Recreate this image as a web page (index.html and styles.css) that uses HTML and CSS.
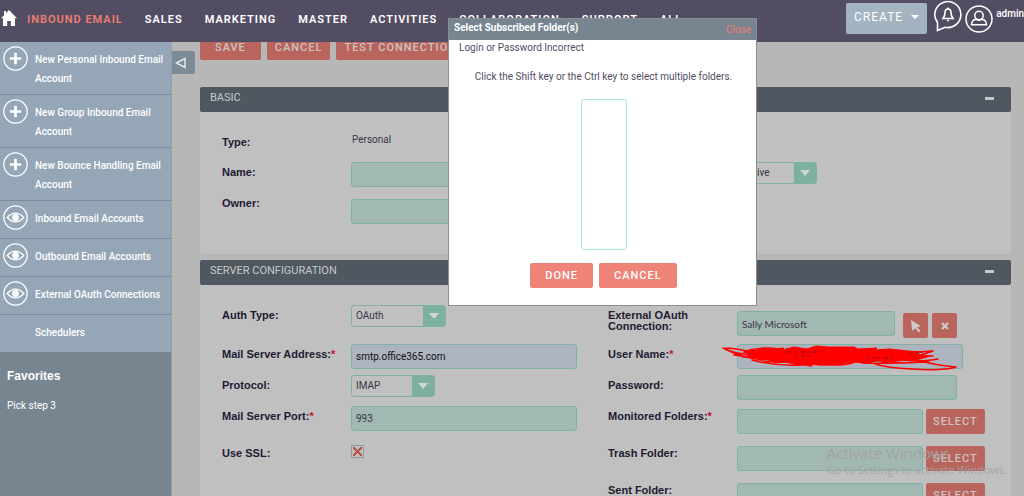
FILE: index.html
```html
<!DOCTYPE html>
<html lang="en">
<head>
<meta charset="utf-8">
<title>Inbound Email</title>
<link rel="stylesheet" href="styles.css">
</head>
<body>
<svg class="defs" aria-hidden="true">
  <symbol id="plus" viewBox="0 0 24 24"><circle cx="12" cy="12" r="11.2" fill="none" stroke="#fff" stroke-width="1.2"/><path d="M12 6.5v11M6.500 12h11" stroke="#fff" stroke-width="2.600"/></symbol>
  <symbol id="eye" viewBox="0 0 24 24"><circle cx="12" cy="12" r="11.2" fill="none" stroke="#fff" stroke-width="1.2"/><path d="M4 12Q12 3.500 20 12Q12 20.500 4 12Z" fill="none" stroke="#fff" stroke-width="1.200"/><circle cx="12" cy="12" r="3.300" fill="#fff"/></symbol>
</svg>

<header class="topbar">
  <a class="home" href="#" aria-label="Home"><svg width="16" height="16" viewBox="0 0 16 16"><path d="M8 0 16 8.200H14V16H9.800V11H6.200V16H2V8.200H0L3 5.100V1H5V3Z" fill="#fff"/></svg></a>
  <nav class="nav">
    <a class="current" href="#">INBOUND EMAIL</a>
    <a href="#">SALES</a>
    <a href="#">MARKETING</a>
    <a href="#">MASTER</a>
    <a href="#">ACTIVITIES</a>
    <a href="#">COLLABORATION</a>
    <a href="#">SUPPORT</a>
    <a href="#">ALL</a>
  </nav>
  <div class="tools">
    <button class="create" type="button">CREATE <span class="caret"></span></button>
    <button class="icon-btn bell" type="button" aria-label="Notifications"><svg width="30" height="32" viewBox="0 0 30 32" fill="none" stroke="#fff" stroke-width="1.600"><path d="M4.500 22.500A13 13 0 1 1 12 27.300L4.500 30.500Z"/><path d="M10 18.500Q12 16 12 12.500Q12 9 15 9Q18 9 18 12.500Q18 16 20 18.500Z"/><path d="M14 20.500h2M15 7.500v2"/></svg></button>
    <button class="icon-btn user" type="button" aria-label="Profile"><svg width="28" height="28" viewBox="0 0 28 28" fill="none" stroke="#fff" stroke-width="1.500"><circle cx="14" cy="14" r="13"/><circle cx="14" cy="10.500" r="4.200"/><path d="M6.500 19.800Q7 14.500 11 14.200Q14 16.500 17 14.200Q21 14.500 21.500 19.800Z"/></svg></button>
    <a class="account" href="#">admin</a>
  </div>
</header>

<div class="page">
  <aside class="sidebar">
    <ul class="actions-list">
      <li><a href="#"><svg><use href="#plus"/></svg><span>New Personal Inbound Email Account</span></a></li>
      <li><a href="#"><svg><use href="#plus"/></svg><span>New Group Inbound Email Account</span></a></li>
      <li><a href="#"><svg><use href="#plus"/></svg><span>New Bounce Handling Email Account</span></a></li>
      <li><a href="#"><svg><use href="#eye"/></svg><span>Inbound Email Accounts</span></a></li>
      <li><a href="#"><svg><use href="#eye"/></svg><span>Outbound Email Accounts</span></a></li>
      <li><a href="#"><svg><use href="#eye"/></svg><span>External OAuth Connections</span></a></li>
      <li><a href="#"><svg></svg><span>Schedulers</span></a></li>
    </ul>
    <h2>Favorites</h2>
    <a class="favorite" href="#">Pick step 3</a>
  </aside>

  <main class="content">
    <button class="collapse" type="button" aria-label="Toggle sidebar"><svg width="12" height="12" viewBox="0 0 12 12"><path d="M1.500 6 10 1.500V10.500Z" fill="none" stroke="#e4e8eb" stroke-width="1.500"/></svg></button>

    <div class="form-actions">
      <button class="btn" type="button">SAVE</button>
      <button class="btn" type="button">CANCEL</button>
      <button class="btn" type="button">TEST CONNECTION</button>
    </div>

    <section class="panel basic">
      <h3><span>BASIC</span><span class="minus"></span></h3>
      <div class="fields">
        <div class="field type"><span class="label">Type:</span><span class="value">Personal</span></div>
        <div></div>
        <div class="field"><label for="name">Name:</label><input id="name" type="text"></div>
        <div class="field unlabelled"><span class="select status"><select aria-label="Status"><option>Active</option></select></span></div>
        <div class="field"><label for="owner">Owner:</label><input class="lowered" id="owner" type="text"></div>
      </div>
    </section>

    <section class="panel">
      <h3><span>SERVER CONFIGURATION</span><span class="minus"></span></h3>
      <div class="fields">
        <div class="field"><label for="auth">Auth Type:</label><span class="select auth"><select id="auth"><option>OAuth</option></select></span></div>
        <div class="field"><label for="oauth">External OAuth Connection:</label>
          <div class="lookup"><input id="oauth" type="text" value="Sally Microsoft">
            <button class="btn square" type="button" aria-label="Choose connection"><svg width="12" height="14" viewBox="0 0 12 14"><path d="M1 1 11 7.200 7 8.200 10.500 12 8.600 13.500 5.500 9.300 2.200 11.800Z" fill="#cfc9c7"/></svg></button>
            <button class="btn square" type="button" aria-label="Clear connection"><svg width="8" height="8" viewBox="0 0 8 8"><path d="M1 1 7 7M7 1 1 7" stroke="#cfc9c7" stroke-width="2.400"/></svg></button>
          </div></div>

        <div class="field"><label for="server">Mail Server Address:<em>*</em></label><input class="filled" id="server" type="text" value="smtp.office365.com"></div>
        <div class="field"><label for="username">User Name:<em>*</em></label>
          <div class="redacted"><input class="filled" id="username" type="text">
            <svg class="scribble" viewBox="0 0 240 28" fill="none" stroke="#f00" stroke-linecap="round" stroke-linejoin="round"><path fill="#f00" stroke-width="1" d="M22 8 30 5 33 7 42 4 47 5 62 4 60 6 72 3 85 5 94 2 106 3 132 3 136 5 155 4 153 6 168 5 186 7 200 8 194 10 208 12 198 15 190 17 182 16 170 18 155 17 145 19 130 18 116 20 98 21 84 20 76 21 64 18 54 19 46 16 34 16 38 14 20 13 30 11Z"/><path stroke-width="1.500" d="M1 4 Q18 12 35 10M1 4 Q14 4 34 9M3 5 Q20 14 42 16M22 8Q40 2 57 5M12 11 Q28 14 46 13M30 16Q60 24 90 20Q120 23 133 18M180 9L211 7 196 12 211 12M180 16Q202 18 216 15M160 18Q190 20 207 17M42 18 58 17 90 22M140 19Q170 20 202 18Q220 22 234 23Q222 27 190 25Q165 24 153 20"/><path stroke="#58212b" stroke-width="1" stroke-dasharray="1 5 2 4" d="M62 8H100M74 12H89M145 14H172M188 9H206"/></svg>
          </div></div>

        <div class="field"><label for="protocol">Protocol:</label><span class="select protocol"><select id="protocol"><option>IMAP</option></select></span></div>
        <div class="field"><label for="password">Password:</label><input class="short" id="password" type="password"></div>

        <div class="field"><label for="port">Mail Server Port:<em>*</em></label><input id="port" type="text" value="993"></div>
        <div class="field"><label for="monitored">Monitored Folders:<em>*</em></label><div class="folder"><input id="monitored" type="text"><button class="btn" type="button">SELECT</button></div></div>

        <div class="field"><label for="ssl">Use SSL:</label><input id="ssl" type="checkbox" checked></div>
        <div class="field"><label for="trash">Trash Folder:</label><div class="folder"><input id="trash" type="text"><button class="btn" type="button">SELECT</button></div></div>

        <div></div>
        <div class="field"><label for="sent">Sent Folder:</label><div class="folder"><input id="sent" type="text"><button class="btn" type="button">SELECT</button></div></div>
      </div>
    </section>
  </main>
</div>

<div class="dialog" role="dialog" aria-labelledby="dialog-title">
  <div class="dialog-head"><h2 id="dialog-title">Select Subscribed Folder(s)</h2><a href="#">Close</a></div>
  <p class="error">Login or Password Incorrect</p>
  <div class="dialog-body">
    <label for="folders">Click the Shift key or the Ctrl key to select multiple folders.</label>
    <select id="folders" multiple></select>
    <div class="dialog-actions"><button class="btn bright" type="button">DONE</button><button class="btn bright" type="button">CANCEL</button></div>
  </div>
</div>

<div class="watermark"><strong>Activate Windows</strong><span>Go to Settings to activate Windows.</span></div>
</body>
</html>
```

FILE: styles.css
```css
* { box-sizing: border-box; }
html, body { height: 100%; }
body {
  margin: 0;
  display: flex;
  flex-direction: column;
  position: relative;
  overflow: hidden;
  background: #b7b7b7;
  color: #3a3548;
  font: 10px/16px Roboto, "Liberation Sans", sans-serif;
}
button, input, select { font: inherit; color: inherit; margin: 0; }
a { color: inherit; text-decoration: none; }
h2, h3, p, ul { margin: 0; padding: 0; }
svg { display: block; flex: none; }
.defs { position: absolute; width: 0; height: 0; }

/* top bar */
.topbar {
  flex: none;
  display: flex;
  align-items: flex-start;
  height: 42px;
  background: #534d64;
  color: #fff;
  position: relative;
  z-index: 1;
}
.home { padding: 10px 10px 0 1px; }
.nav {
  display: flex;
  gap: 22px;
  padding-top: 12px;
  font-size: 11px;
  font-weight: 600;
  letter-spacing: 1px;
  white-space: nowrap;
}
.nav .current { color: #ee7d70; }
.tools { display: flex; margin-left: auto; }
.create {
  display: flex;
  align-items: center;
  gap: 8px;
  height: 31px;
  margin: 3px 6px 0 0;
  padding: 0 8px 3px;
  border: 0;
  border-radius: 2px;
  background: #a3b4c0;
  color: #fff;
  font-size: 12px;
  letter-spacing: 1px;
}
.caret { border: 4px solid transparent; border-top-color: #fff; border-bottom: 0; }
.icon-btn { padding: 0; border: 0; background: none; align-self: flex-start; }
.user { margin: 5px 3px 0 2px; }
.account { padding: 6px 0 0; font-weight: 500; }

/* sidebar */
.page { flex: 1; min-height: 0; display: flex; }
.sidebar {
  flex: none;
  width: 172px;
  background: #778591;
  border-right: 1px solid #96a0a8;
  color: #fff;
}
.actions-list { list-style: none; background: #95a6b7; }
.actions-list li + li { border-top: 1px solid #778c9c; }
.actions-list a {
  display: flex;
  gap: 7px;
  min-height: 37px;
  padding: 8px 4px 6px 3px;
  font-weight: 500;
  line-height: 19px;
}
.actions-list svg { width: 25px; height: 25px; margin: -4px 0; }
.sidebar h2 { padding: 15px 7px 0; font: bold 12px/18px "Liberation Sans", sans-serif; }
.favorite { display: block; padding: 13px 7px; }

/* form page */
.content { flex: 1; min-width: 0; position: relative; padding: 0 13px 0 28px; }
.collapse {
  position: absolute;
  left: 0;
  top: 9px;
  width: 23px;
  height: 23px;
  padding: 0 0 0 3px;
  border: 0;
  border-radius: 0 2px 2px 0;
  background: #7b8b97;
}
.form-actions { display: flex; gap: 6px; margin-top: -7px; padding-bottom: 27px; }
.btn {
  height: 25px;
  padding: 0 15px;
  border: 0;
  border-radius: 2px;
  background: #b9645c;
  color: #c9c3c2;
  font-size: 11px;
  font-weight: 500;
  letter-spacing: 1px;
  white-space: nowrap;
}
.form-actions .btn + .btn { padding: 0 8px; }
.panel { margin-bottom: 6px; }
.panel h3 {
  display: flex;
  justify-content: space-between;
  height: 25px;
  padding: 3px 17px 0 10px;
  border-radius: 2px;
  background: #4f5761;
  color: #c9c9c9;
  font-size: 11px;
  font-weight: 400;
}
.minus { width: 9px; height: 3px; margin-top: 7px; background: #c9c9c9; }
.fields {
  display: grid;
  grid-template-columns: 1fr 1fr;
  row-gap: 6px;
  padding: 20px 17px 30px 22px;
  border-radius: 0 0 4px 4px;
  background: #c0c0c0;
}
.field { display: flex; align-items: flex-start; }
.field > label, .field > .label {
  flex: none;
  width: 129px;
  padding: 5px 24px 0 0;
  color: #221b33;
  font: bold 11px/11px "Liberation Sans", sans-serif;
  white-space: nowrap;
}
.field > label[for="oauth"] { white-space: normal; }
.unlabelled { padding-left: 129px; }
label em { color: #c8102e; font-style: normal; }
.type { min-height: 24px; }
.value { padding-left: 1px; }
.field input {
  width: 226px;
  height: 25px;
  padding: 0 4px;
  border: 1px solid #7eb3a4;
  border-radius: 3px;
  background: #a2b8b2;
}
.field input.filled { background: #adb4c0; color: #111; }
.field input.lowered { margin-top: 6px; }
.field input.short { width: 220px; }
.field input[type="checkbox"] {
  appearance: none;
  width: 13px;
  height: 13px;
  margin-top: 2px;
  padding: 0;
  border: 1px solid #929aa0;
  border-radius: 0;
  background:
    linear-gradient(45deg, transparent 41%, #b9544c 41% 59%, transparent 59%) center / 9px 9px no-repeat,
    linear-gradient(-45deg, transparent 41%, #b9544c 41% 59%, transparent 59%) center / 9px 9px no-repeat;
}
.select { position: relative; height: 22px; }
.select select {
  appearance: none;
  width: 100%;
  height: 22px;
  padding: 0 4px;
  border: 1px solid #7eb3a4;
  border-radius: 3px;
  background: linear-gradient(#7eb0a2, #7eb0a2) right / 22px 100% no-repeat #c0c0c0;
}
.select::after {
  content: "";
  position: absolute;
  right: 7px;
  top: 8px;
  border: 5px solid transparent;
  border-top: 6px solid #d0d6d4;
  border-bottom: 0;
  pointer-events: none;
}
.auth { width: 95px; }
.protocol { width: 84px; }
.status { width: 80px; }
.lookup { display: flex; gap: 4px; padding: 6px 0 2px; }
.lookup input { width: 158px; margin-right: 4px; font-family: Lato, sans-serif; }
.square { width: 25px; padding: 0; margin: 2px 0 -2px; display: grid; place-items: center; }
.folder { display: flex; gap: 3px; padding: 3px 0; }
.folder input { width: 186px; }
.folder .btn { padding: 0 7px; }
.redacted { position: relative; }
.redacted input { display: block; }
.scribble { position: absolute; left: -15px; top: 0; width: 240px; height: 28px; }

/* dialog */
.dialog {
  position: absolute;
  z-index: 2;
  left: 448px;
  top: 18px;
  width: 309px;
  padding-bottom: 17px;
  border: 1px solid #8d8d92;
  background: #fff;
  color: #534d64;
}
.dialog-head {
  display: flex;
  justify-content: space-between;
  height: 21px;
  padding: 1px 5px 0;
  background: #778591;
  color: #fff;
}
.dialog-head h2 { font-size: 10px; font-weight: 700; }
.dialog-head a { padding-top: 2px; color: #ee7d70; }
.error { padding-left: 10px; }
.dialog-body { display: flex; flex-direction: column; align-items: center; padding: 13px 0 0 2px; }
#folders {
  width: 46px;
  height: 151px;
  margin: 14px 0 13px;
  border: 1px solid #a5e8d6;
  border-radius: 3px;
  background: #fff;
}
.dialog-actions { display: flex; gap: 6px; }
.btn.bright { background: #f08377; color: #fff; }

.watermark {
  position: absolute;
  z-index: 3;
  right: 17px;
  bottom: 18px;
  display: flex;
  flex-direction: column;
  color: #a3a3a3;
  font-family: "Open Sans", sans-serif;
  font-size: 11px;
  pointer-events: none;
}
.watermark strong { font-size: 15px; font-weight: 400; line-height: 18px; }
```
